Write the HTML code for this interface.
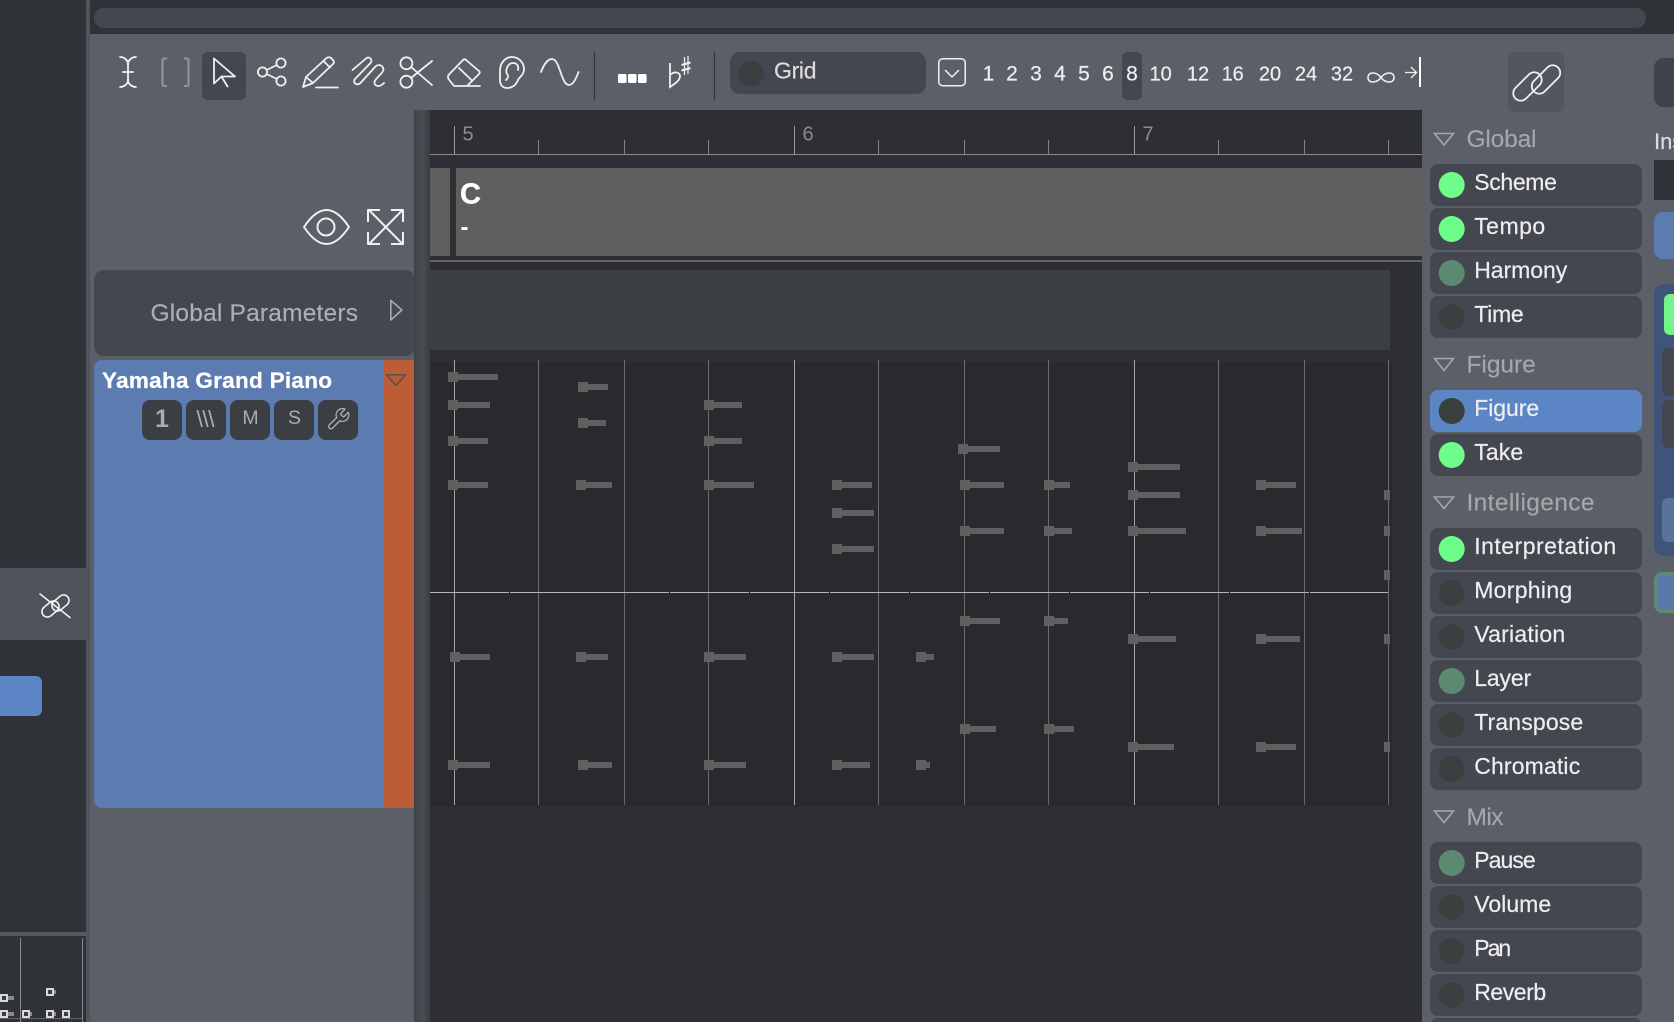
<!DOCTYPE html>
<html><head><meta charset="utf-8"><title>Score editor</title>
<style>
html,body{margin:0;padding:0;width:1674px;height:1022px;overflow:hidden;background:#2f3236}
svg{display:block;position:absolute;left:0;top:0}
text{font-family:"Liberation Sans",sans-serif}
.b{fill:#44474f}
.lb{font-size:23px;fill:#eeeeee;stroke:#eeeeee;stroke-width:.2px}
.hd{font-size:24.5px;fill:#a5a8aa;stroke:#a5a8aa;stroke-width:.15px}
.tri{fill:none;stroke:#a5a8aa;stroke-width:1.6}
.num{font-size:21px;fill:#eeeeee;text-anchor:middle;stroke:#eeeeee;stroke-width:.2px}
.n2{font-size:20px}
.ic{fill:none;stroke:#f0f0f0;stroke-width:1.8;stroke-linecap:round;stroke-linejoin:round}
.rl{font-size:20px;fill:#8a8b8d}
.tb{fill:#3b3e43}
.tt{fill:#adadad}
.dt{fill:#d8d8d8}
.di{fill:#3a3d42}
</style></head><body>
<svg width="1674" height="1022" viewBox="0 0 1674 1022" xmlns="http://www.w3.org/2000/svg">
<defs><linearGradient id="g" x1="0" x2="1" y1="0" y2="0"><stop offset="0" stop-color="#3f4248"/><stop offset=".55" stop-color="#494d53"/><stop offset="1" stop-color="#3a3d42"/></linearGradient></defs>

<!-- backgrounds -->
<rect width="1674" height="1022" fill="#2f3236"/>
<rect x="86" y="0" width="4" height="1022" fill="#4f545c"/>
<rect x="90" y="34" width="1584" height="988" fill="#5b5f67"/>
<rect x="94" y="8" width="1552" height="20" rx="10" fill="#43474f"/>

<!-- left dark panel -->
<rect x="0" y="568" width="90" height="72" fill="#4e525a"/>
<rect x="-10" y="676" width="52" height="40" rx="6" fill="#5b85c5"/>
<g fill="none" stroke="#f0f0f0" stroke-width="1.6" stroke-linecap="round">
<rect x="41" y="603.500" width="19" height="11" rx="5.500" transform="rotate(-40 50.500 609)"/>
<rect x="51" y="597.500" width="19" height="11" rx="5.500" transform="rotate(-40 60.500 603)"/>
<path d="M40 594L70 617.500"/>
</g>
<rect x="0" y="932" width="86" height="4" fill="#555a62"/>
<path d="M20.500 938V1022M82.500 938V1022" stroke="#8a8a8a"/>
<path d="M0 1018.500H82" stroke="#666"/>
<path d="M8 996h6v4H8zM8 1012h6v4H8zM30 1012h2v4h-2zM54 1012h2v4h-2zM54 990h2v4h-2z" fill="#8a8a8a"/>
<g class="dt"><rect x="0" y="994" width="8" height="8"/><rect x="0" y="1010" width="8" height="8"/><rect x="22" y="1010" width="8" height="8"/><rect x="46" y="1010" width="8" height="8"/><rect x="46" y="988" width="8" height="8"/><rect x="62" y="1010" width="8" height="8"/></g>
<g class="di"><rect x="2" y="996" width="4" height="4"/><rect x="2" y="1012" width="4" height="4"/><rect x="24" y="1012" width="4" height="4"/><rect x="48" y="1012" width="4" height="4"/><rect x="48" y="990" width="4" height="4"/><rect x="64" y="1012" width="4" height="4"/></g>

<!-- main editor -->
<rect x="414" y="110" width="16" height="912" fill="url(#g)"/>
<rect x="430" y="110" width="992" height="912" fill="#2d2f34"/>
<path d="M430 154.500H1422" stroke="#8a8a8a"/>
<path d="M454.500 126V154M794.500 126V154M1134.500 126V154" stroke="#9a9a9a"/>
<path d="M538.500 140V154M624.500 140V154M708.500 140V154M878.500 140V154M964.500 140V154M1048.500 140V154M1218.500 140V154M1304.500 140V154M1388.500 140V154" stroke="#858585"/>
<text class="rl" x="462.500" y="140.500">5</text>
<text class="rl" x="802.500" y="140.500">6</text>
<text class="rl" x="1142.500" y="140.500">7</text>
<rect x="430" y="168" width="20" height="88" fill="#5f5f5f"/>
<rect x="456" y="168" width="966" height="88" fill="#5f5f5f"/>
<text x="460" y="203.500" font-size="29" font-weight="700" fill="#fff" stroke="#fff" stroke-width=".4">C</text>
<text x="460.500" y="235" font-size="24" font-weight="700" fill="#fff">-</text>
<rect x="430" y="260" width="992" height="2" fill="#62646a"/>
<rect x="430" y="270" width="960" height="80" fill="#3b3e43"/>
<rect x="430" y="362" width="962" height="444" fill="#282a2e"/>
<path d="M538.500 360V805M624.500 360V805M708.500 360V805M878.500 360V805M964.500 360V805M1048.500 360V805M1218.500 360V805M1304.500 360V805M1388.500 360V805" stroke="#686a6d"/>
<path d="M454.500 360V805M794.500 360V805M1134.500 360V805" stroke="#a4a4a4"/>
<path d="M430 592.500H1388" stroke="#b4b4b4"/>
<path d="M509 592.500h1M669 592.500h1M749 592.500h1M829 592.500h1M909 592.500h1M989 592.500h1M1069 592.500h1M1149 592.500h1M1229 592.500h1M1309 592.500h1" stroke="#111"/>
<!-- notes tails -->
<path fill="none" stroke="#606060" stroke-width="6" d="M448 377H498M448 405H490M448 441H488M448 485H488M578 387H608M578 423H606M576 485H612M704 405H742M704 441H742M704 485H754M832 485H872M832 513H874M832 549H874M450 657H490M576 657H608M704 657H746M832 657H874M916 657H934M448 765H490M578 765H612M704 765H746M832 765H870M916 765H930M958 449H1000M960 485H1004M960 531H1004M1044 485H1070M1044 531H1072M1128 467H1180M1128 495H1180M1128 531H1186M1256 485H1296M1256 531H1302M960 621H1000M1044 621H1068M1128 639H1176M1256 639H1300M960 729H996M1044 729H1074M1128 747H1174M1256 747H1296"/>
<!-- notes heads -->
<path fill="none" stroke="#606060" stroke-width="10" d="M448 377h10M448 405h10M448 441h10M448 485h10M578 387h10M578 423h10M576 485h10M704 405h10M704 441h10M704 485h10M832 485h10M832 513h10M832 549h10M450 657h10M576 657h10M704 657h10M832 657h10M916 657h10M448 765h10M578 765h10M704 765h10M832 765h10M916 765h10M958 449h10M960 485h10M960 531h10M1044 485h10M1044 531h10M1128 467h10M1128 495h10M1128 531h10M1256 485h10M1256 531h10M960 621h10M1044 621h10M1128 639h10M1256 639h10M960 729h10M1044 729h10M1128 747h10M1256 747h10M1384 495h6M1384 531h6M1384 575h6M1384 639h6M1384 747h6"/>

<!-- track list -->
<path d="M104 270H406a8 8 0 0 1 8 8V348a8 8 0 0 1-8 8H104a10 10 0 0 1-10-10V280a10 10 0 0 1 10-10Z" fill="#44474f"/>
<text x="150.500" y="321" font-size="24.500" fill="#acafb3" stroke="#acafb3" stroke-width=".15" textLength="207.500" lengthAdjust="spacing">Global Parameters</text>
<path d="M390.800 300.500V320L402 310Z" fill="none" stroke="#aaa" stroke-width="1.600" stroke-linejoin="round"/>
<path d="M102 360H414V808H102a8 8 0 0 1-8-8V368a8 8 0 0 1 8-8Z" fill="#5b7bb1"/>
<rect x="384" y="360" width="30" height="448" fill="#bd5d35"/>
<path d="M386.500 374.800H405.500L396 385.500Z" fill="none" stroke="#54504e" stroke-width="1.500" stroke-linejoin="round"/>
<text x="102" y="388" font-size="22.500" font-weight="700" fill="#fff" stroke="#fff" stroke-width=".25" textLength="230" lengthAdjust="spacing">Yamaha Grand Piano</text>
<rect class="tb" x="142" y="400" width="40" height="40" rx="8"/>
<rect class="tb" x="186" y="400" width="40" height="40" rx="8"/>
<rect class="tb" x="230" y="400" width="40" height="40" rx="8"/>
<rect class="tb" x="274" y="400" width="40" height="40" rx="8"/>
<rect class="tb" x="318" y="400" width="40" height="40" rx="8"/>
<text class="tt" x="162" y="427" font-size="25" font-weight="700" text-anchor="middle">1</text>
<text class="tt" x="205.500" y="427" font-size="23" text-anchor="middle" textLength="18" lengthAdjust="spacing">\\\</text>
<text class="tt" x="250.500" y="424" font-size="19.500" text-anchor="middle">M</text>
<text class="tt" x="294.500" y="424" font-size="19.500" text-anchor="middle">S</text>
<path transform="translate(325.500 406.500) scale(1.060)" fill="none" stroke="#adadad" stroke-width="1.300" stroke-linejoin="round" d="M14.700 6.300a1 1 0 0 0 0 1.400l1.600 1.600a1 1 0 0 0 1.400 0l3.770-3.770a6 6 0 0 1-7.940 7.940l-6.910 6.910a2.120 2.120 0 0 1-3-3l6.910-6.910a6 6 0 0 1 7.940-7.940l-3.760 3.760z"/>

<!-- toolbar -->
<rect x="202" y="52" width="44" height="48" rx="6" fill="#44474f"/>
<path class="ic" d="M120 57C124 57 128 60 128 64V80C128 84 124 87 120 87M136 57C132 57 128 60 128 64M136 87C132 87 128 84 128 80M123 72H133"/>
<path d="M167 58.500H164a1.500 1.500 0 0 0-1.500 1.500V84.500a1.500 1.500 0 0 0 1.500 1.500H167M184 58.500H187a1.500 1.500 0 0 1 1.500 1.500V84.500a1.500 1.500 0 0 1-1.500 1.500H184" fill="none" stroke="#95979a" stroke-width="2"/>
<path class="ic" d="M214 58.500V83.500L221.500 76.500H235ZM221.500 76.500L227.500 86.500"/>
<g class="ic"><circle cx="262.500" cy="72" r="4.600"/><circle cx="281" cy="63" r="4.600"/><circle cx="281" cy="81" r="4.600"/><path d="M266.700 70L276.800 65M266.700 74L276.800 79"/></g>
<path class="ic" d="M303 87L306 77L326.500 58Q329 56.500 331 58L333.500 60.500Q334.500 62.500 333 64L313 83ZM306 77L313 83M323.500 61L330 67.500M316 87.500H338"/>
<path class="ic" d="M352.500 70L366 58.500C369.500 55.500 373 60 370.500 63L355 79C352 82.500 357 86 360 83.500L375.500 66.500C379 63 385 66.500 383 71C381 75 375.500 78 374.500 82C374 86 379 88 384 83"/>
<g class="ic"><circle cx="406.400" cy="63.300" r="6"/><circle cx="406.400" cy="81.700" r="6"/><path d="M411 67L432 85M411 78L432 61"/></g>
<path class="ic" d="M448.500 75L463 60Q464.500 58.500 466 60L479 71Q480.500 72.500 479 74L467 86H454L448.500 79Q447.500 77 448.500 75ZM459 68L471.400 80M455 86H480"/>
<path class="ic" d="M500 71C500 62 506 57 512 57C519 57 524 63 524 69C524 75 520 76 518 80C516 85 512 88 507 88C502 88 500 84 500 80ZM506 80C508 78 509 76 507 74C505 70 508 63 513 63C517 63 519 66 518 70"/>
<path class="ic" d="M541 72C544 64 548 59 552 59C560 59 561 85 569 85C573 85 576 79 578.500 72"/>
<path d="M594.500 52V100M714.500 52V100" stroke="#33363b" stroke-width="1.200"/>
<g fill="#fff"><rect x="618" y="74" width="8.600" height="9" rx="1.500"/><rect x="628" y="74" width="8.600" height="9" rx="1.500"/><rect x="638" y="74" width="8.600" height="9" rx="1.500"/></g>
<path d="M670 63V87C674 84 680 81 680 76C680 72 674 71 670 75" fill="none" stroke="#f0f0f0" stroke-width="1.800"/>
<path d="M684.500 57V75M688 56V74" stroke="#f0f0f0" stroke-width="1.200"/>
<path d="M681.500 65L690.500 62.500M681.500 70.500L690.500 68" stroke="#f0f0f0" stroke-width="2.200"/>
<rect x="730" y="52" width="196" height="42" rx="10" fill="#44474f"/>
<circle cx="751" cy="73.500" r="13" fill="#3b3f3f"/>
<text x="774" y="78.500" font-size="23" fill="#dddddd" stroke="#dddddd" stroke-width=".2" textLength="42.500" lengthAdjust="spacing">Grid</text>
<rect x="938.750" y="58.750" width="26.500" height="27" rx="4" fill="none" stroke="#f0f0f0" stroke-width="1.500"/>
<path d="M945 70L952 77L959 70" fill="none" stroke="#f0f0f0" stroke-width="1.500"/>
<rect x="1122" y="52" width="20" height="48" rx="6" fill="#44474f"/>
<text class="num" x="988.500" y="80.700">1</text>
<text class="num" x="1012" y="80.700">2</text>
<text class="num" x="1036" y="80.700">3</text>
<text class="num" x="1060" y="80.700">4</text>
<text class="num" x="1084" y="80.700">5</text>
<text class="num" x="1108" y="80.700">6</text>
<text class="num" x="1132" y="80.700">8</text>
<text class="num n2" x="1160.600" y="80.700">10</text>
<text class="num n2" x="1198" y="80.700">12</text>
<text class="num n2" x="1232.700" y="80.700">16</text>
<text class="num n2" x="1270" y="80.700">20</text>
<text class="num n2" x="1306" y="80.700">24</text>
<text class="num n2" x="1342" y="80.700">32</text>
<path d="M1381 77.500C1377 72 1368 71 1368 77.500C1368 84 1377 83 1381 77.500C1385 72 1394 71 1394 77.500C1394 84 1385 83 1381 77.500Z" fill="none" stroke="#f0f0f0" stroke-width="1.500"/>
<path d="M1405 72.500H1416M1411 67L1416.500 72.500L1411 78" fill="none" stroke="#f0f0f0" stroke-width="1.300"/>
<rect x="1419" y="57" width="2" height="30" fill="#fff"/>
<rect x="1508" y="52" width="56" height="60" rx="6" fill="#52565e"/>
<g fill="none" stroke="#f0f0f0" stroke-width="1.800">
<rect x="1510.500" y="79" width="34" height="15" rx="7.500" transform="rotate(-45 1527.500 86.500)"/>
<rect x="1529" y="72" width="34" height="15" rx="7.500" transform="rotate(-45 1546 79.500)"/>
</g>
<rect x="1654" y="58" width="40" height="49" rx="10" fill="#3f4248"/>

<!-- sidebar -->
<text x="1654" y="149" font-size="22" fill="#dddddd" stroke="#dddddd" stroke-width=".2">Ins</text>
<rect x="1654" y="160" width="30" height="40" fill="#2f3236"/>
<rect x="1654" y="212" width="40" height="47" rx="9" fill="#5b7bb1"/>
<rect x="1654" y="284" width="40" height="272" rx="10" fill="#3f5478"/>
<rect x="1664" y="294" width="30" height="41" rx="6" fill="#74f58a"/>
<rect x="1662" y="348" width="30" height="48" rx="6" fill="#44474f"/>
<rect x="1662" y="400" width="30" height="48" rx="6" fill="#44474f"/>
<rect x="1662" y="498" width="30" height="44" rx="6" fill="#5a7399"/>
<rect x="1655.500" y="573.500" width="40" height="38" rx="7" fill="#5a78a8" stroke="#5d8a70" stroke-width="3"/>

<path class="tri" d="M1434.500 133.500H1453.500L1444 145Z"/>
<text class="hd" x="1466.500" y="147" textLength="70" lengthAdjust="spacing">Global</text>
<path class="tri" d="M1434.500 358.500H1453.500L1444 370.500Z"/>
<text class="hd" x="1466.500" y="372.700" textLength="69.300" lengthAdjust="spacing">Figure</text>
<path class="tri" d="M1434.500 497H1453.500L1444 508.500Z"/>
<text class="hd" x="1466.500" y="510.700" textLength="128" lengthAdjust="spacing">Intelligence</text>
<path class="tri" d="M1434.500 811H1453.500L1444 822.500Z"/>
<text class="hd" x="1466.500" y="825" textLength="37" lengthAdjust="spacing">Mix</text>

<rect class="b" x="1430" y="164" width="212" height="42" rx="8"/>
<rect class="b" x="1430" y="208" width="212" height="42" rx="8"/>
<rect class="b" x="1430" y="252" width="212" height="42" rx="8"/>
<rect class="b" x="1430" y="296" width="212" height="42" rx="8"/>
<rect x="1430" y="390" width="212" height="42" rx="8" fill="#5b85c5"/>
<rect class="b" x="1430" y="434" width="212" height="42" rx="8"/>
<rect class="b" x="1430" y="528" width="212" height="42" rx="8"/>
<rect class="b" x="1430" y="572" width="212" height="42" rx="8"/>
<rect class="b" x="1430" y="616" width="212" height="42" rx="8"/>
<rect class="b" x="1430" y="660" width="212" height="42" rx="8"/>
<rect class="b" x="1430" y="704" width="212" height="42" rx="8"/>
<rect class="b" x="1430" y="748" width="212" height="42" rx="8"/>
<rect class="b" x="1430" y="842" width="212" height="42" rx="8"/>
<rect class="b" x="1430" y="886" width="212" height="42" rx="8"/>
<rect class="b" x="1430" y="930" width="212" height="42" rx="8"/>
<rect class="b" x="1430" y="974" width="212" height="42" rx="8"/>
<rect class="b" x="1430" y="1018" width="212" height="42" rx="8"/>

<circle cx="1451.700" cy="185" r="13" fill="#6efc8a"/>
<circle cx="1451.700" cy="229" r="13" fill="#6efc8a"/>
<circle cx="1451.700" cy="273" r="13" fill="#5c8a70"/>
<circle cx="1451.700" cy="317" r="13" fill="#3b3f3f"/>
<circle cx="1451.700" cy="411" r="13" fill="#393e3e"/>
<circle cx="1451.700" cy="455" r="13" fill="#6efc8a"/>
<circle cx="1451.700" cy="549" r="13" fill="#6efc8a"/>
<circle cx="1451.700" cy="593" r="13" fill="#3b3f3f"/>
<circle cx="1451.700" cy="637" r="13" fill="#3b3f3f"/>
<circle cx="1451.700" cy="681" r="13" fill="#5c8a70"/>
<circle cx="1451.700" cy="725" r="13" fill="#3b3f3f"/>
<circle cx="1451.700" cy="769" r="13" fill="#3b3f3f"/>
<circle cx="1451.700" cy="863" r="13" fill="#5c8a70"/>
<circle cx="1451.700" cy="907" r="13" fill="#3b3f3f"/>
<circle cx="1451.700" cy="951" r="13" fill="#3b3f3f"/>
<circle cx="1451.700" cy="995" r="13" fill="#3b3f3f"/>

<text class="lb" x="1474.200" y="190" textLength="82.700" lengthAdjust="spacing">Scheme</text>
<text class="lb" x="1474.200" y="234" textLength="71" lengthAdjust="spacing">Tempo</text>
<text class="lb" x="1474.200" y="278" textLength="93" lengthAdjust="spacing">Harmony</text>
<text class="lb" x="1474.200" y="322" textLength="49.500" lengthAdjust="spacing">Time</text>
<text class="lb" x="1474.200" y="416" textLength="65" lengthAdjust="spacing">Figure</text>
<text class="lb" x="1474.200" y="460" textLength="49" lengthAdjust="spacing">Take</text>
<text class="lb" x="1474.200" y="554" textLength="142" lengthAdjust="spacing">Interpretation</text>
<text class="lb" x="1474.200" y="598" textLength="98" lengthAdjust="spacing">Morphing</text>
<text class="lb" x="1474.200" y="642" textLength="91" lengthAdjust="spacing">Variation</text>
<text class="lb" x="1474.200" y="686" textLength="57" lengthAdjust="spacing">Layer</text>
<text class="lb" x="1474.200" y="730" textLength="109" lengthAdjust="spacing">Transpose</text>
<text class="lb" x="1474.200" y="774" textLength="106" lengthAdjust="spacing">Chromatic</text>
<text class="lb" x="1474.200" y="868" textLength="61.500" lengthAdjust="spacing">Pause</text>
<text class="lb" x="1474.200" y="912" textLength="77" lengthAdjust="spacing">Volume</text>
<text class="lb" x="1474.200" y="956" textLength="37" lengthAdjust="spacing">Pan</text>
<text class="lb" x="1474.200" y="1000" textLength="72" lengthAdjust="spacing">Reverb</text>

<!-- eye + expand -->
<g fill="none" stroke="#f0f0f0" stroke-width="2" stroke-linejoin="round">
<path d="M304 227C312 215 320 210 326.500 210C333 210 341 215 349 227C341 239 333 244 326.500 244C320 244 312 239 304 227Z"/>
<circle cx="326" cy="227" r="8.500"/>
<path d="M368.500 209.500L403 244.500M403 209.500L368.500 244.500M368 222V210H380M391 210H403V222M368 232V244H380M391 244H403V232"/>
</g>
</svg>
</body></html>
